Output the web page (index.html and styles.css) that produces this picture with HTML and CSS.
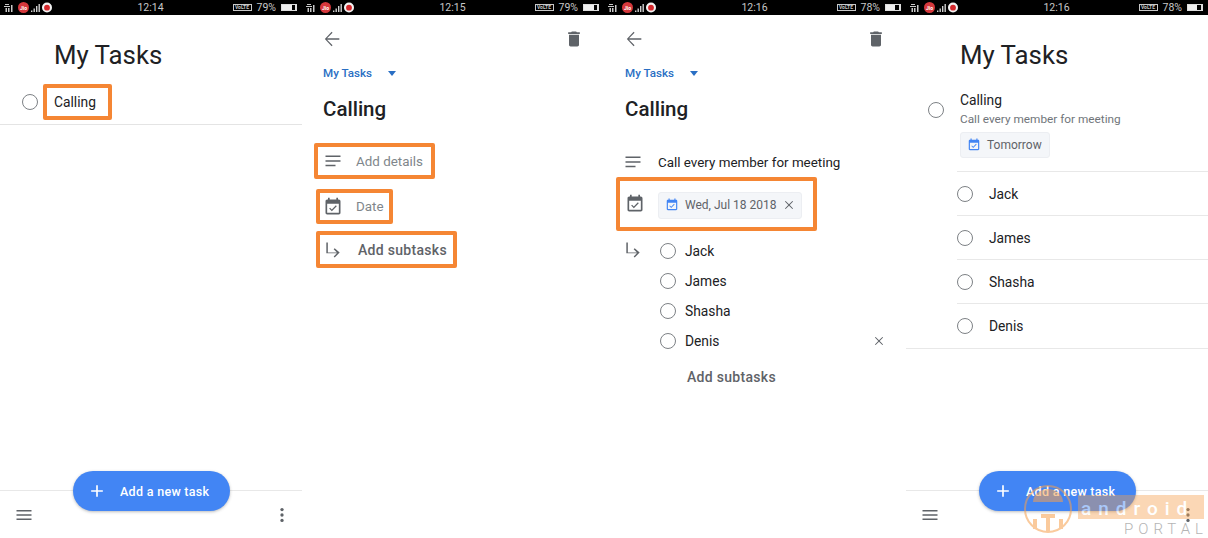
FILE: index.html
```html
<!DOCTYPE html>
<html lang="en">
<head>
<meta charset="utf-8">
<title>Google Tasks walkthrough</title>
<link rel="stylesheet" href="styles.css">
</head>
<body>
<svg class="defs" width="0" height="0" aria-hidden="true">
  <defs>
    <symbol id="i-back" viewBox="0 0 24 24"><path d="M20 11.2H6.6l6-6-1-1L4.2 12l7.4 7.8 1-1-6-6H20z"/></symbol>
    <symbol id="i-trash" viewBox="0 0 24 24"><path d="M6 19c0 1.1.9 2 2 2h8c1.1 0 2-.9 2-2V7H6v12zM19 4h-3.5l-1-1h-5l-1 1H5v2h14V4z"/></symbol>
    <symbol id="i-notes" viewBox="0 0 24 24"><path d="M3 5.5h18v1.8H3zM3 11h18v1.8H3zM3 16.500h12v1.800H3z"/></symbol>
    <symbol id="i-event" viewBox="0 0 24 24"><path d="M16.530 11.060L15.470 10l-4.880 4.880-2.120-2.120-1.060 1.060L10.590 17l5.940-5.940zM19 3h-1V1h-2v2H8V1H6v2H5c-1.110 0-1.990.9-1.990 2L3 19c0 1.100.89 2 2 2h14c1.100 0 2-.9 2-2V5c0-1.100-.9-2-2-2zm0 16H5V8h14v11z"/></symbol>
    <symbol id="i-sub" viewBox="0 0 24 24"><path d="M20 15l-6 6-1.200-1.200 3.900-3.900H4V3h1.800v12.100h10.900l-3.900-3.900L14 10z"/></symbol>
    <symbol id="i-add" viewBox="0 0 24 24"><path d="M19 13h-6v6h-2v-6H5v-2h6V5h2v6h6v2z"/></symbol>
    <symbol id="i-close" viewBox="0 0 24 24"><path d="M19 6.200L17.800 5 12 10.800 6.200 5 5 6.200 10.800 12 5 17.800 6.200 19 12 13.200 17.800 19 19 17.800 13.200 12z"/></symbol>
    <symbol id="i-menu" viewBox="0 0 24 24"><path d="M3 18h18v-1.800H3zm0-5.100h18v-1.800H3zM3 6v1.800h18V6z"/></symbol>
    <symbol id="i-more" viewBox="0 0 24 24"><circle cx="12" cy="5.500" r="2"/><circle cx="12" cy="12" r="2"/><circle cx="12" cy="18.500" r="2"/></symbol>
    <symbol id="i-status-left" viewBox="0 0 54 15">
      <g fill="#c9c9c9"><rect x="5" y="4" width="4" height="1"/><rect x="4" y="6" width="6" height="1"/><rect x="5.500" y="8" width="1.500" height="4"/><rect x="8" y="8" width="1.500" height="4"/><rect x="11" y="5" width="1.500" height="7"/></g>
      <circle cx="23.500" cy="7.500" r="5.500" fill="#d5383c"/>
      <text x="23.500" y="9.500" text-anchor="middle" font-size="5" font-weight="700" font-family="Roboto, sans-serif" fill="#fff">Jio</text>
      <g fill="#d0d0d0"><rect x="31" y="10.500" width="1.400" height="1.500"/><rect x="33.500" y="8.500" width="1.400" height="3.500"/><rect x="36" y="6" width="1.400" height="6"/><rect x="38.500" y="4" width="1.400" height="8"/></g>
      <circle cx="47" cy="7.500" r="5" fill="#f2f2f2"/><circle cx="47" cy="7.700" r="2.900" fill="#d5282c"/>
    </symbol>
  </defs>
</svg>

<main class="board">

  <section class="screen">
    <div class="status"><svg class="status-left"><use href="#i-status-left"/></svg><span class="clock">12:14</span><span class="status-right"><span class="volte">VoLTE</span><span class="pct">79%</span><span class="battery"><span class="charge"></span></span></span></div>
    <h1 class="list-title">My Tasks</h1>
    <div class="task-first">
      <span class="ring ring-first"></span>
      <span class="hl hl-calling">Calling</span>
    </div>
    <div class="bottom">
      <svg class="ico ico-menu"><use href="#i-menu"/></svg>
      <svg class="ico ico-more"><use href="#i-more"/></svg>
      <div class="fab"><svg class="fab-plus"><use href="#i-add"/></svg><span>Add a new task</span></div>
    </div>
  </section>

  <section class="screen">
    <div class="status"><svg class="status-left"><use href="#i-status-left"/></svg><span class="clock">12:15</span><span class="status-right"><span class="volte">VoLTE</span><span class="pct">79%</span><span class="battery"><span class="charge"></span></span></span></div>
    <div class="toolbar">
      <svg class="ico ico-back"><use href="#i-back"/></svg>
      <svg class="ico ico-trash"><use href="#i-trash"/></svg>
    </div>
    <div class="crumb"><span>My Tasks</span><i class="caret"></i></div>
    <h2 class="detail-title">Calling</h2>
    <div class="hl hl-details"><svg class="ico ico-row"><use href="#i-notes"/></svg><span class="muted">Add details</span></div>
    <div class="hl hl-date"><svg class="ico ico-row"><use href="#i-event"/></svg><span class="muted">Date</span></div>
    <div class="hl hl-sub"><svg class="ico ico-row"><use href="#i-sub"/></svg><span class="strong">Add subtasks</span></div>
  </section>

  <section class="screen">
    <div class="status"><svg class="status-left"><use href="#i-status-left"/></svg><span class="clock">12:16</span><span class="status-right"><span class="volte">VoLTE</span><span class="pct">78%</span><span class="battery"><span class="charge charge-78"></span></span></span></div>
    <div class="toolbar">
      <svg class="ico ico-back"><use href="#i-back"/></svg>
      <svg class="ico ico-trash"><use href="#i-trash"/></svg>
    </div>
    <div class="crumb"><span>My Tasks</span><i class="caret"></i></div>
    <h2 class="detail-title">Calling</h2>
    <div class="row-note"><svg class="ico ico-row"><use href="#i-notes"/></svg><span>Call every member for meeting</span></div>
    <div class="hl hl-chip">
      <svg class="ico ico-row"><use href="#i-event"/></svg>
      <span class="chip chip-date"><svg class="chip-ico"><use href="#i-event"/></svg><span>Wed, Jul 18 2018</span><svg class="chip-x"><use href="#i-close"/></svg></span>
    </div>
    <div class="subs">
      <svg class="ico ico-row ico-subs"><use href="#i-sub"/></svg>
      <ul class="sub-list">
        <li><span class="ring"></span>Jack</li>
        <li><span class="ring"></span>James</li>
        <li><span class="ring"></span>Shasha</li>
        <li><span class="ring"></span>Denis<svg class="sub-x"><use href="#i-close"/></svg></li>
      </ul>
    </div>
    <div class="add-sub strong">Add subtasks</div>
  </section>

  <section class="screen">
    <div class="status"><svg class="status-left"><use href="#i-status-left"/></svg><span class="clock">12:16</span><span class="status-right"><span class="volte">VoLTE</span><span class="pct">78%</span><span class="battery"><span class="charge charge-78"></span></span></span></div>
    <h1 class="list-title">My Tasks</h1>
    <div class="task-open">
      <span class="ring ring-open"></span>
      <div class="task-open-body">
        <div class="task-name">Calling</div>
        <div class="task-desc">Call every member for meeting</div>
        <span class="chip chip-tomorrow"><svg class="chip-ico"><use href="#i-event"/></svg><span>Tomorrow</span></span>
      </div>
    </div>
    <ul class="nested">
      <li><span class="ring"></span>Jack</li>
      <li><span class="ring"></span>James</li>
      <li><span class="ring"></span>Shasha</li>
      <li><span class="ring"></span>Denis</li>
    </ul>
    <div class="bottom">
      <svg class="ico ico-menu"><use href="#i-menu"/></svg>
      <svg class="ico ico-more"><use href="#i-more"/></svg>
      <div class="fab"><svg class="fab-plus"><use href="#i-add"/></svg><span>Add a new task</span></div>
    </div>
    <div class="watermark">
      <svg class="wm-logo" viewBox="0 0 48 52"><circle cx="24" cy="26" r="23" fill="none" stroke="#f6a04d" stroke-width="2"/><path d="M9 19a15 13 0 0 1 30 0z" fill="#f6a04d"/><path d="M17 33h14M24 33v15M11 36v10M37 36v10" stroke="#f6a04d" stroke-width="4" fill="none"/></svg>
      <div class="wm-text"><div class="wm-android"><span>android</span></div><span class="wm-portal">PORTAL</span></div>
    </div>
  </section>

</main>
</body>
</html>
```
FILE: styles.css
```css
* { box-sizing: border-box; }
html, body { margin: 0; padding: 0; }
body { background: #fff; color: #202124; font-family: Roboto, "Liberation Sans", sans-serif; overflow: hidden; }
.defs { position: absolute; }
h1, h2, ul { margin: 0; padding: 0; }
ul { list-style: none; }

.board { display: grid; grid-template-columns: repeat(4, 302px); width: 1208px; height: 538px; }
.screen { position: relative; display: flex; flex-direction: column; height: 538px; overflow: hidden; }

/* status bar */
.status { position: relative; flex: none; height: 15px; background: #000; color: #c8c8c8; display: flex; align-items: center; justify-content: center; font-size: 10px; }
.status-left { position: absolute; left: 0; top: 0; width: 54px; height: 15px; }
.clock { font-size: 10.500px; margin-right: 1px; }
.status-right { position: absolute; right: 5px; top: 0; height: 15px; display: flex; align-items: center; }
.volte { border: 1px solid #c8c8c8; font-size: 5px; line-height: 5px; height: 7px; width: 19px; text-align: center; font-weight: 700; margin-right: 5px; }
.pct { font-size: 10.500px; margin-right: 5px; }
.battery { display: block; width: 16px; height: 7px; border: 1px solid #ddd; border-right-width: 2px; padding: 0; }
.charge { display: block; width: 79%; height: 100%; background: #eee; }
.charge-78 { width: 70%; }

/* lists */
.list-title { font-weight: 400; font-size: 25.800px; line-height: 32px; margin: 24px 0 0 54px; color: #202124; }
.task-first { display: flex; align-items: flex-start; height: 40px; margin-top: 14px; padding-left: 22px; border-bottom: 1px solid #e4e4e4; }
.ring { flex: none; display: block; width: 16px; height: 16px; border: 1.500px solid #7d8185; border-radius: 50%; }
.ring-first { margin-top: 9px; margin-right: 5px; }
.hl { border: 4px solid #f58634; border-radius: 2px; background: #fff; }
.hl-calling { display: flex; align-items: center; width: 69px; height: 36px; margin-top: -1px; padding-left: 7px; font-size: 13.800px; }

/* bottom bar */
.bottom { position: relative; margin-top: auto; flex: none; height: 48px; border-top: 1px solid #e8e8e8; }
.ico { display: block; fill: #5f6368; }
.ico-menu { position: absolute; left: 14px; top: 14px; width: 20px; height: 20px; }
.ico-more { position: absolute; left: 272px; top: 14px; width: 20px; height: 20px; }
.fab { position: absolute; left: 73px; top: -20px; width: 157px; height: 40px; border-radius: 20px; background: #4285f4; color: #fff; display: flex; align-items: center; padding-left: 14px; font-size: 12.500px; font-weight: 500; letter-spacing: .3px; box-shadow: 0 1px 3px rgba(60,64,67,.35); }
.fab-plus { width: 20px; height: 20px; fill: #fff; margin-right: 13px; }

/* detail */
.toolbar { display: flex; justify-content: space-between; align-items: center; height: 24px; margin-top: 12px; padding: 0 20px 0 19px; }
.ico-back { width: 22px; height: 22px; }
.ico-trash { width: 20px; height: 20px; }
.crumb { display: flex; align-items: center; margin: 14px 0 0 21px; height: 16px; font-size: 11.600px; font-weight: 500; color: #2a6fc4; }
.caret { display: block; margin-left: 16px; width: 0; height: 0; border: 4.500px solid transparent; border-top: 5px solid #2a6fc4; border-bottom: 0; }
.detail-title { font-size: 20.500px; font-weight: 500; line-height: 28px; margin: 14px 0 0 21px; color: #202124; }
.ico-row { flex: none; width: 20px; height: 20px; }
.muted { color: #80868b; font-size: 13.400px; }
.strong { color: #5f6368; font-size: 14px; font-weight: 500; letter-spacing: .3px; }
.hl-details, .hl-date, .hl-sub, .hl-chip { display: flex; align-items: center; }
.hl-details { width: 121px; height: 36px; margin: 20px 0 0 12px; padding-left: 4.500px; }
.hl-details .muted { margin-left: 13.500px; padding-top: 1px; }
.hl-date { width: 77px; height: 35px; margin: 10px 0 0 14px; padding-left: 2.500px; }
.hl-date .muted { margin-left: 13.500px; }
.hl-sub { width: 141px; height: 37px; margin: 7px 0 0 14px; padding-left: 2.500px; }
.hl-sub .strong { margin-left: 15.500px; }

/* screen 3 */
.row-note { display: flex; align-items: center; height: 36px; margin: 21px 0 0 18.500px; font-size: 13.400px; color: #202124; }
.row-note .ico-row { margin-right: 15.500px; }
.hl-chip { width: 201px; height: 54px; margin: -3px 0 0 12px; padding-left: 4.500px; }
.chip { display: inline-flex; align-items: center; background: #f4f6f9; border: 1px solid #eceef2; border-radius: 3px; color: #5f6368; font-size: 12px; }
.chip-date { width: 144px; height: 27px; margin: 2px 0 0 13.500px; padding-left: 6px; }
.chip-tomorrow { width: 90px; height: 26px; padding-left: 6px; margin-top: 4px; }
.chip-ico { width: 14px; height: 14px; fill: #4285f4; margin-right: 6px; flex: none; }
.chip-x { width: 14px; height: 14px; fill: #5f6368; margin-left: 5px; flex: none; }
.subs { position: relative; display: flex; margin: 5px 0 0 19px; }
.ico-subs { margin-top: 4px; }
.sub-list { margin-left: 17px; width: 232px; }
.sub-list li { position: relative; display: flex; align-items: center; height: 30px; font-size: 13.800px; }
.sub-list .ring { margin-right: 9px; }
.sub-x { position: absolute; right: 6px; top: 8px; width: 14px; height: 14px; fill: #5f6368; }
.add-sub { margin: 12px 0 0 83px; line-height: 18px; }

/* screen 4 */
.task-open { display: flex; margin-top: 13px; height: 87px; flex: none; }
.ring-open { margin: 18px 0 0 22px; }
.task-open-body { margin-left: 16px; padding-top: 5px; }
.task-name { font-size: 13.800px; line-height: 20px; margin-top: 1px; }
.task-desc { font-size: 11.800px; line-height: 17px; margin-top: 1px; color: #70757a; }
.nested { flex: none; border-bottom: 1px solid #e8e8e8; }
.nested li { display: flex; align-items: center; height: 44px; margin-left: 51px; border-top: 1px solid #e8e8e8; font-size: 13.800px; }
.nested li:last-child { height: 45px; padding-bottom: 1px; }
.nested .ring { margin-right: 16px; }

.watermark { position: absolute; left: 118px; top: 483px; display: flex; align-items: flex-start; opacity: .55; }
.wm-logo { width: 48px; height: 52px; }
.wm-text { display: flex; flex-direction: column; align-items: flex-end; margin: 12px 0 0 6px; }
.wm-android { width: 126px; height: 24px; padding: 4px 0 0 3px; background: rgba(246,160,77,.75); color: #fff; font-size: 19px; font-weight: 500; line-height: 20px; letter-spacing: 7px; }
.wm-portal { color: #777; font-size: 15px; font-weight: 300; line-height: 18px; letter-spacing: 5px; margin-top: 1px; margin-right: -4px; }
```
